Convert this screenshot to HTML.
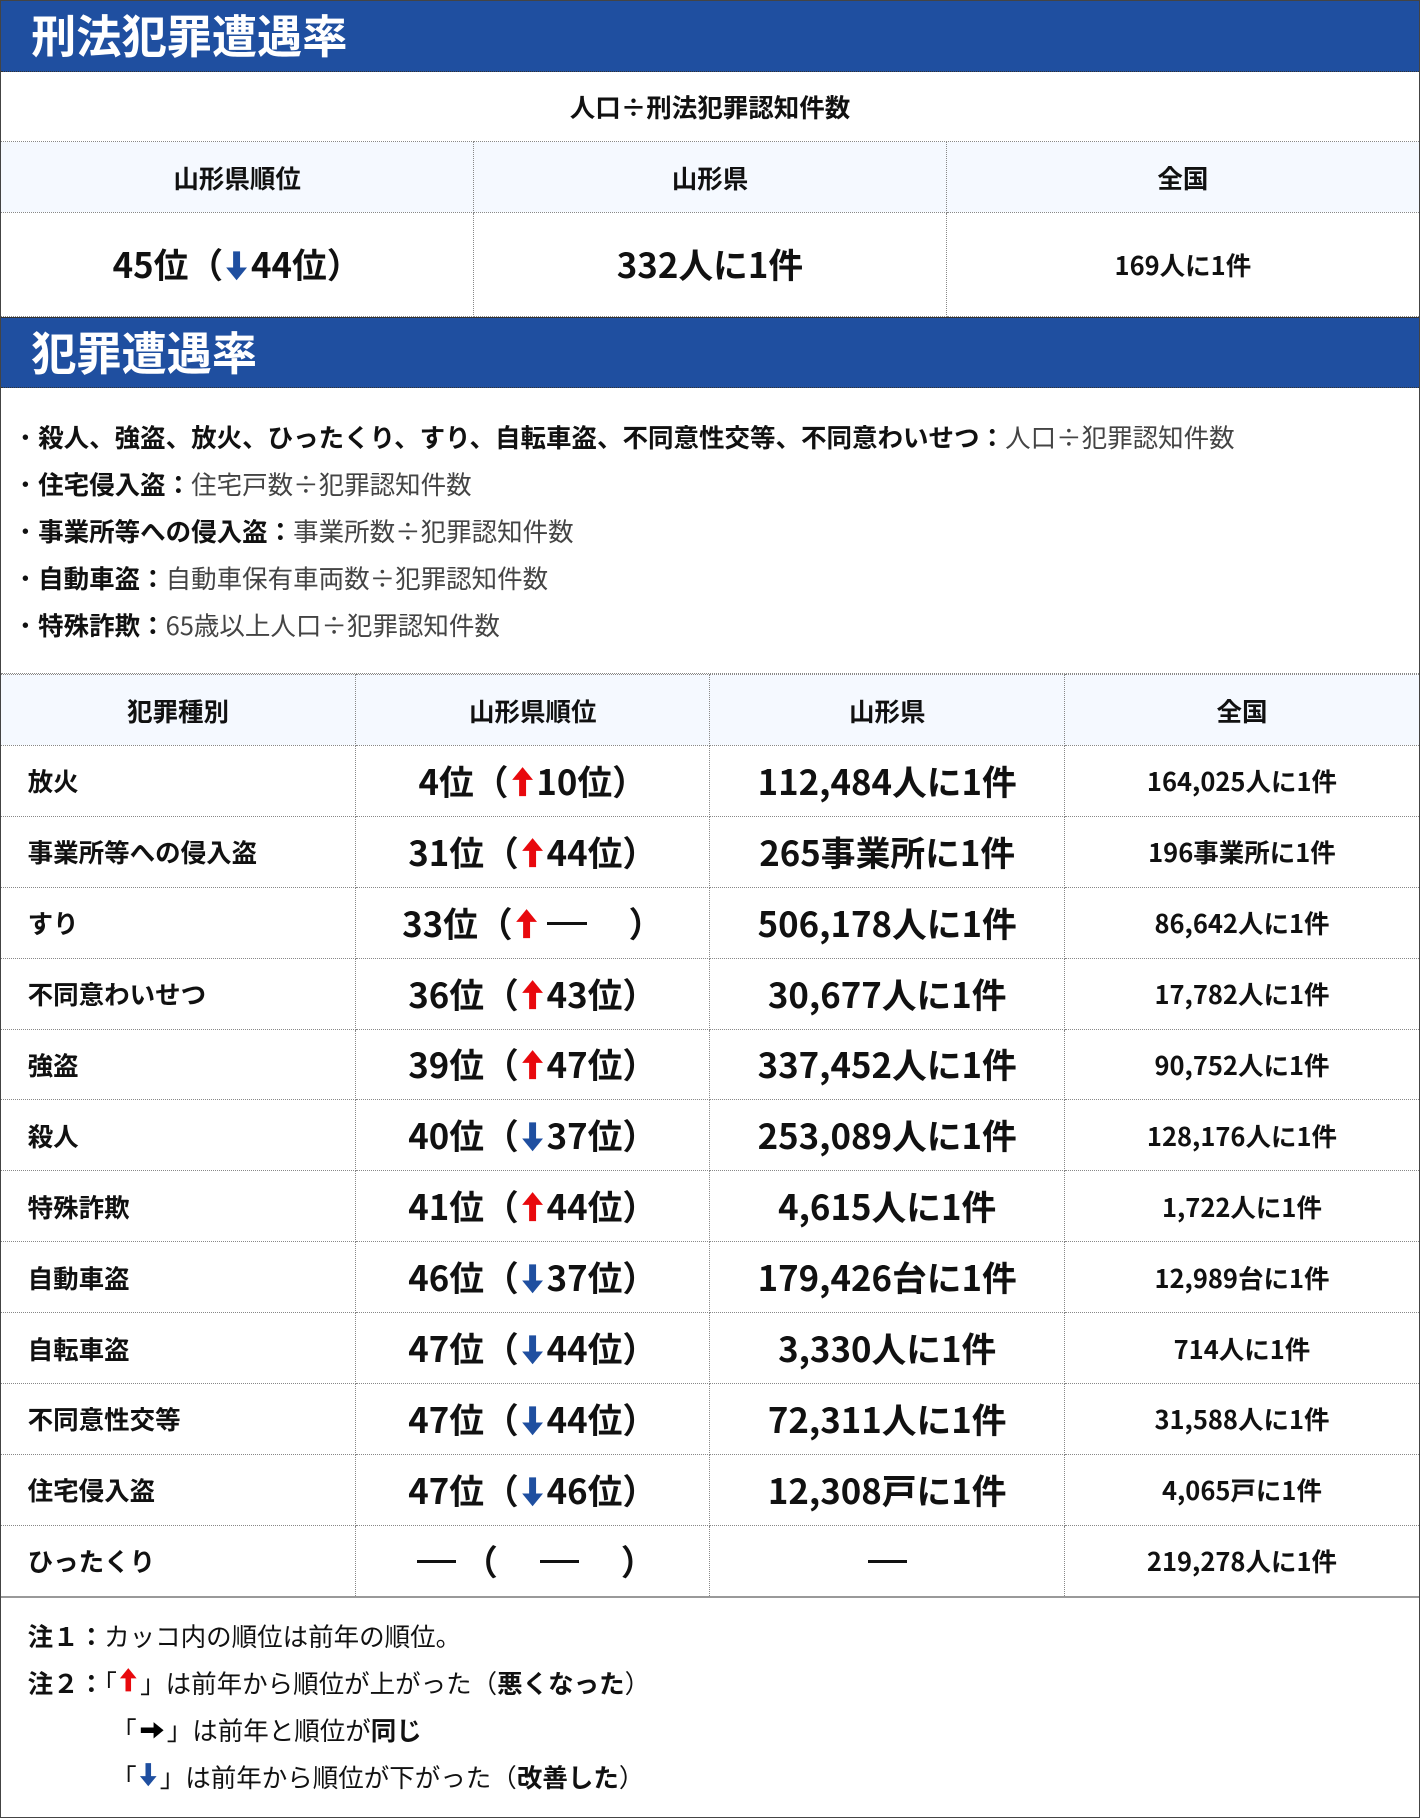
<!DOCTYPE html>
<html><head><meta charset="utf-8">
<style>
html,body{margin:0;padding:0;background:#fff;}
body{width:1420px;height:1818px;overflow:hidden;}
#w{zoom:1.15918;width:1225px;height:1568px;position:relative;font-family:"Noto Sans CJK JP","Liberation Sans",sans-serif;color:#111;box-sizing:border-box;border:1px solid #444;}
.hd{background:#1f4fa0;color:#fff;font-weight:bold;font-size:39px;height:61px;line-height:58px;padding-left:26px;border-bottom:1px dotted #333;box-sizing:border-box;letter-spacing:0px;}
table{border-collapse:collapse;width:100%;table-layout:fixed;}
td{border:1px dotted #888;text-align:center;font-weight:bold;padding:0;}
tr>td:first-child{border-left:none}
tr>td:last-child{border-right:none}
.th td{background:#f5f9ff;font-size:22px;height:60px;}
.big{font-size:30px;}
.mid{font-size:22px;}
.l{text-align:left;padding-left:23px;font-size:22px;}
#t2 tr:not(.th) td{height:60.3px;}
.ar{display:inline-block;width:20px;height:28px;vertical-align:-3px;margin:0 2px;}
.d{display:inline-block;width:34px;height:3px;background:#111;vertical-align:10px;margin:0 6px;}
.list{padding:23px 0 21px 10px;font-size:22px;line-height:40.5px;border-bottom:1px dotted #888;}
.list span{font-weight:normal;color:#444;}
.list b{font-weight:bold;}
.notes{border-top:2px solid #999;padding:13px 0 0 23px;font-size:22px;line-height:40.5px;}
.notes .i{padding-left:72px;}
</style></head><body><div id="w">
<div class="hd">刑法犯罪遭遇率</div>
<table>
<tr><td colspan="3" class="mid" style="height:60px;border-top:none">人口÷刑法犯罪認知件数</td></tr>
<tr class="th"><td>山形県順位</td><td>山形県</td><td>全国</td></tr>
<tr><td class="big" style="height:89px">45位（<svg class="ar" viewBox="0 0 20 28"><path d="M7 2h6v14h6L10 27 1 16h6z" fill="#1f4fa0"/></svg>44位）</td><td class="big">332人に1件</td><td class="mid">169人に1件</td></tr>
</table>
<div class="hd" style="border-top:1px solid #333">犯罪遭遇率</div>
<div class="list">
<div>・<b>殺人、強盗、放火、ひったくり、すり、自転車盗、不同意性交等、不同意わいせつ：</b><span>人口÷犯罪認知件数</span></div>
<div>・<b>住宅侵入盗：</b><span>住宅戸数÷犯罪認知件数</span></div>
<div>・<b>事業所等への侵入盗：</b><span>事業所数÷犯罪認知件数</span></div>
<div>・<b>自動車盗：</b><span>自動車保有車両数÷犯罪認知件数</span></div>
<div>・<b>特殊詐欺：</b><span>65歳以上人口÷犯罪認知件数</span></div>
</div>
<table id="t2">
<tr class="th"><td>犯罪種別</td><td>山形県順位</td><td>山形県</td><td>全国</td></tr>
<tr><td class="l">放火</td><td class="big">4位（<svg class="ar" viewBox="0 0 20 28"><path d="M7 26h6V12h6L10 1 1 12h6z" fill="#e8090d"/></svg>10位）</td><td class="big">112,484人に1件</td><td class="mid">164,025人に1件</td></tr>
<tr><td class="l">事業所等への侵入盗</td><td class="big">31位（<svg class="ar" viewBox="0 0 20 28"><path d="M7 26h6V12h6L10 1 1 12h6z" fill="#e8090d"/></svg>44位）</td><td class="big">265事業所に1件</td><td class="mid">196事業所に1件</td></tr>
<tr><td class="l">すり</td><td class="big">33位（<svg class="ar" viewBox="0 0 20 28"><path d="M7 26h6V12h6L10 1 1 12h6z" fill="#e8090d"/></svg><span class="d"></span>　）</td><td class="big">506,178人に1件</td><td class="mid">86,642人に1件</td></tr>
<tr><td class="l">不同意わいせつ</td><td class="big">36位（<svg class="ar" viewBox="0 0 20 28"><path d="M7 26h6V12h6L10 1 1 12h6z" fill="#e8090d"/></svg>43位）</td><td class="big">30,677人に1件</td><td class="mid">17,782人に1件</td></tr>
<tr><td class="l">強盗</td><td class="big">39位（<svg class="ar" viewBox="0 0 20 28"><path d="M7 26h6V12h6L10 1 1 12h6z" fill="#e8090d"/></svg>47位）</td><td class="big">337,452人に1件</td><td class="mid">90,752人に1件</td></tr>
<tr><td class="l">殺人</td><td class="big">40位（<svg class="ar" viewBox="0 0 20 28"><path d="M7 2h6v14h6L10 27 1 16h6z" fill="#1f4fa0"/></svg>37位）</td><td class="big">253,089人に1件</td><td class="mid">128,176人に1件</td></tr>
<tr><td class="l">特殊詐欺</td><td class="big">41位（<svg class="ar" viewBox="0 0 20 28"><path d="M7 26h6V12h6L10 1 1 12h6z" fill="#e8090d"/></svg>44位）</td><td class="big">4,615人に1件</td><td class="mid">1,722人に1件</td></tr>
<tr><td class="l">自動車盗</td><td class="big">46位（<svg class="ar" viewBox="0 0 20 28"><path d="M7 2h6v14h6L10 27 1 16h6z" fill="#1f4fa0"/></svg>37位）</td><td class="big">179,426台に1件</td><td class="mid">12,989台に1件</td></tr>
<tr><td class="l">自転車盗</td><td class="big">47位（<svg class="ar" viewBox="0 0 20 28"><path d="M7 2h6v14h6L10 27 1 16h6z" fill="#1f4fa0"/></svg>44位）</td><td class="big">3,330人に1件</td><td class="mid">714人に1件</td></tr>
<tr><td class="l">不同意性交等</td><td class="big">47位（<svg class="ar" viewBox="0 0 20 28"><path d="M7 2h6v14h6L10 27 1 16h6z" fill="#1f4fa0"/></svg>44位）</td><td class="big">72,311人に1件</td><td class="mid">31,588人に1件</td></tr>
<tr><td class="l">住宅侵入盗</td><td class="big">47位（<svg class="ar" viewBox="0 0 20 28"><path d="M7 2h6v14h6L10 27 1 16h6z" fill="#1f4fa0"/></svg>46位）</td><td class="big">12,308戸に1件</td><td class="mid">4,065戸に1件</td></tr>
<tr><td class="l" style="border-bottom:none">ひったくり</td><td class="big" style="border-bottom:none"><span class="d"></span>（　<span class="d"></span>　）</td><td class="big" style="border-bottom:none"><span class="d"></span></td><td class="mid" style="border-bottom:none">219,278人に1件</td></tr>
</table>
<div class="notes">
<div><b>注１：</b>カッコ内の順位は前年の順位。</div>
<div><b>注２：</b>「<svg class="ar" viewBox="0 0 20 28" style="width:16px"><path d="M7 26h6V12h6L10 1 1 12h6z" fill="#e8090d"/></svg>」は前年から順位が上がった（<b>悪くなった</b>）</div>
<div class="i">「<svg class="ar" viewBox="0 0 28 20" style="width:22px;height:16px;vertical-align:0"><path d="M2 7h14V1l11 9-11 9v-6H2z" fill="#000"/></svg>」は前年と順位が<b>同じ</b></div>
<div class="i">「<svg class="ar" viewBox="0 0 20 28" style="width:16px"><path d="M7 2h6v14h6L10 27 1 16h6z" fill="#1f4fa0"/></svg>」は前年から順位が下がった（<b>改善した</b>）</div>
</div>
</div></body></html>
